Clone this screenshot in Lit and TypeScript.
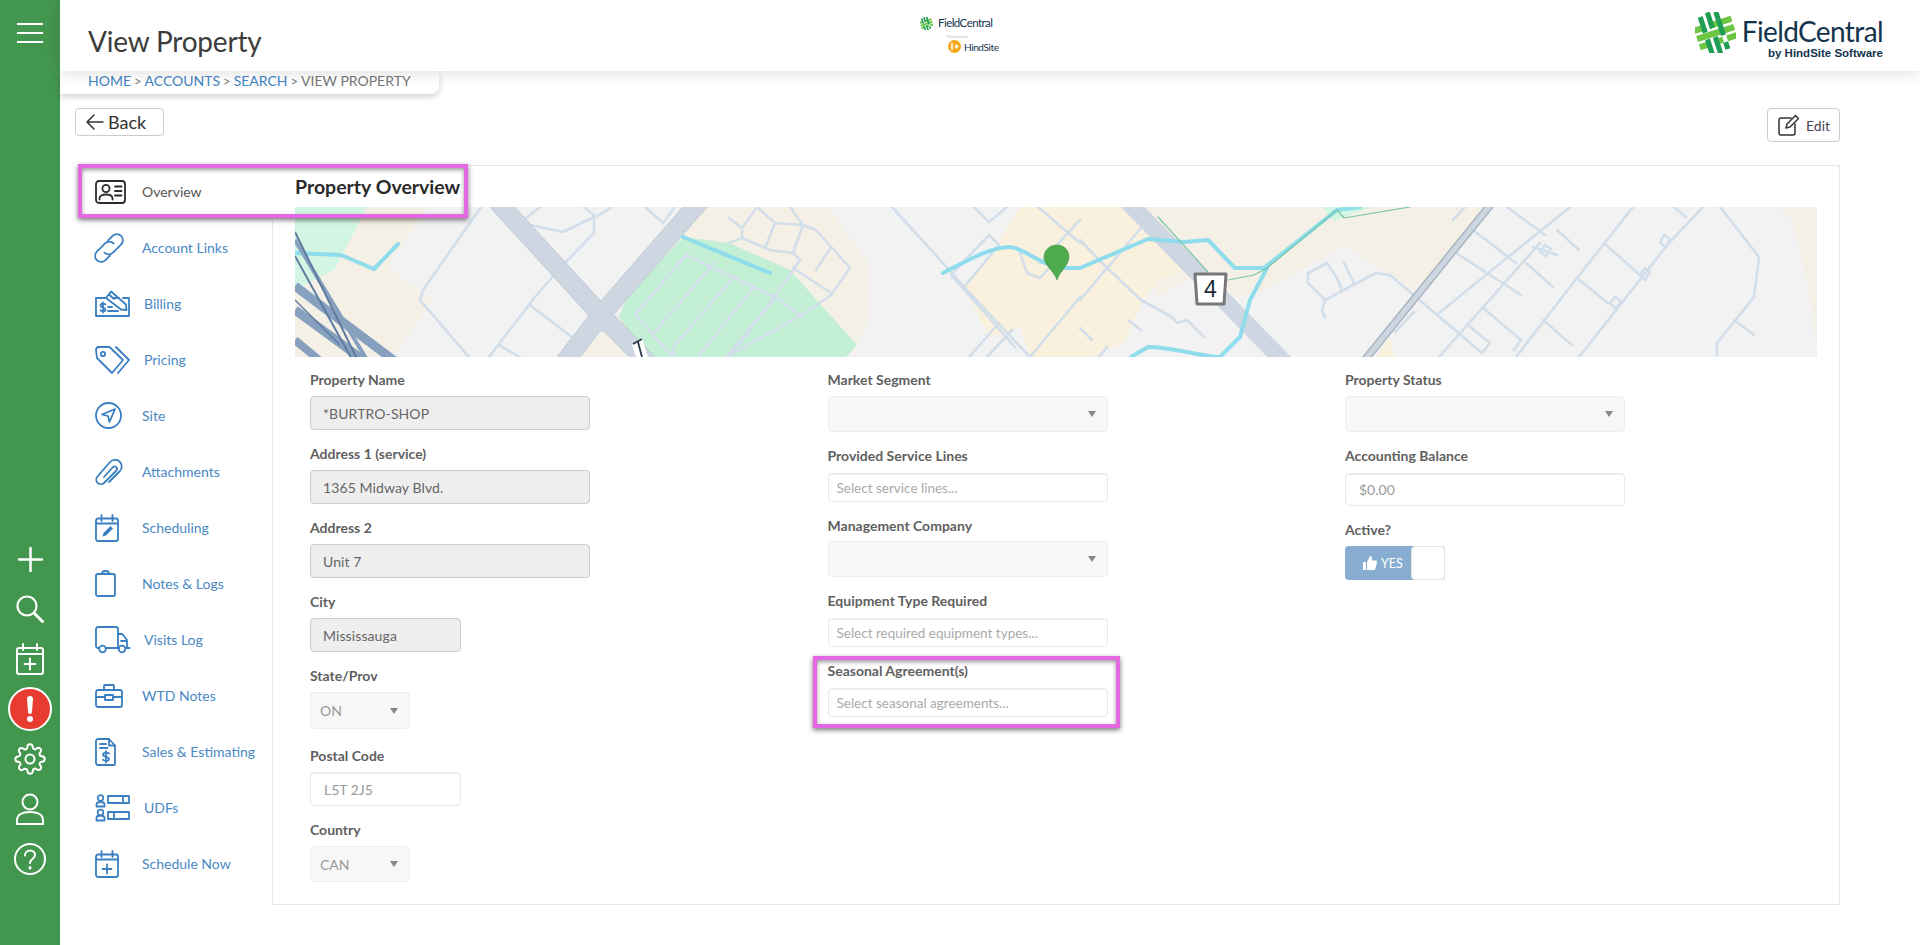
import { LitElement, html, css, svg } from "lit";
import { customElement } from "lit/decorators.js";

const calBase = svg`<rect x="1" y="4.5" width="22" height="22.5" rx="2"/><path d="M1 9.5h22M6.5 1v6M17.5 1v6"/>`;

const navIcons: Record<string, { w: number; h: number; body: unknown }> = {
  overview: { w: 31, h: 24, body: svg`<rect x="1" y="1" width="29" height="22" rx="3"/><circle cx="11" cy="8.5" r="3.6"/><path d="M4.5 19.5v-1.2c0-2.6 2.6-3.8 6.5-3.8s6.5 1.2 6.5 3.8v1.2M20 6.5h6.5M20 11h6.5M20 15.5h6.5"/>` },
  links: { w: 28, h: 28, body: svg`<g transform="rotate(-45 14 14) translate(.98 .98) scale(.93)" style="stroke-width:1.9"><path d="M21 14a6.5 6.5 0 0 0-6.500-6.500H2a6.500 6.500 0 0 0 0 13H9"/><path d="M7 14a6.500 6.500 0 0 0 6.500 6.500H26a6.500 6.500 0 0 0 0-13H19"/></g>` },
  billing: { w: 35, h: 27, body: svg`<path d="M10 8H1v18h33V8h-6M18 8h6"/><path d="M11 8l5-6.500 15 13 .5 5.500-5.500-.5z"/><path d="M14 4.500l5 4.500"/><path d="M10.500 14.500c-1-1.300-5-1.400-5 1s5 1.700 5 4-4 2.200-5 .8M8 12.500v10M13 17h4M13 21h10"/>` },
  pricing: { w: 35, h: 28, body: svg`<path d="M1 4a3 3 0 0 1 3-3h10.500L28 14 17 27 2 12z"/><circle cx="8" cy="8" r="2.200"/><path d="M21 1l13 13-11 13"/>` },
  site: { w: 27, h: 27, body: svg`<circle cx="13.500" cy="13.500" r="12.500"/><path d="M20 7L7 12.500l6 1.500 1.500 6z"/>` },
  attach: { w: 27, h: 28, body: svg`<path d="M9 19L18 9a2.500 2.500 0 0 1 3.500 3.500L9 25a4.600 4.600 0 0 1-6.500-6.500L15 4a6.700 6.700 0 0 1 10 9L14 24"/>` },
  scheduling: { w: 24, h: 28, body: svg`${calBase}<path class="fill" d="M7.500 22.500l1-3.500 7-7 2.500 2.500-7 7z"/>` },
  notes: { w: 21, h: 27, body: svg`<rect x="1" y="4" width="19" height="22" rx="1.800"/><path d="M7 4V3.500a3.500 2.500 0 0 1 7 0V4"/>` },
  visits: { w: 35, h: 27, body: svg`<path d="M4 22H3a2 2 0 0 1-2-2V3a2 2 0 0 1 2-2h18a2 2 0 0 1 2 2v19H11"/><path d="M23 8h3.500a2 2 0 0 1 1.500.8l4 5.200v8h-1M23 22h1M26 15h6"/><circle cx="7.500" cy="23" r="3.300"/><circle cx="27" cy="23" r="3.300"/><path d="M32 22h2.500"/>` },
  wtd: { w: 28, h: 24, body: svg`<rect x="1" y="6" width="26" height="17" rx="2"/><path d="M9 6V2a1 1 0 0 1 1-1h8a1 1 0 0 1 1 1v4M1 13h9M18 13h9"/><rect x="10" y="11" width="8" height="5"/>` },
  sales: { w: 21, h: 28, body: svg`<path d="M3 1h11l6 6.500V26a1 1 0 0 1-1 1H3a2 2 0 0 1-2-2V3a2 2 0 0 1 2-2z"/><path d="M14 1v6.500h6M5 6h6M5 10h7.500"/><path d="M14 15.500c-1-1.200-6-1.300-6 1.200s6 1.800 6 4.200-5 2.300-6 .9M11 13v11.500"/>` },
  udf: { w: 35, h: 27, body: svg`<circle cx="5.500" cy="4" r="2.800"/><path d="M1.500 12.500v-2c0-1.500 1.500-2.500 4-2.500s4 1 4 2.500v2z"/><circle cx="5.500" cy="18.500" r="2.800"/><path d="M1.500 26.500v-2.500c0-1.500 1.500-2.500 4-2.500s4 1 4 2.500v2.500z"/><rect x="13" y="2" width="21" height="7"/><path d="M28 2v7"/><rect x="13" y="18" width="21" height="7"/><path d="M19 18v7"/>` },
  schedule: { w: 24, h: 28, body: svg`${calBase}<path d="M12 14.500v9M7.500 19h9"/>` },
};

const navItems = [
  { label: "Overview", icon: "overview", active: true },
  { label: "Account Links", icon: "links" },
  { label: "Billing", icon: "billing", wide: true },
  { label: "Pricing", icon: "pricing", wide: true },
  { label: "Site", icon: "site" },
  { label: "Attachments", icon: "attach" },
  { label: "Scheduling", icon: "scheduling" },
  { label: "Notes & Logs", icon: "notes" },
  { label: "Visits Log", icon: "visits", wide: true },
  { label: "WTD Notes", icon: "wtd" },
  { label: "Sales & Estimating", icon: "sales" },
  { label: "UDFs", icon: "udf", wide: true },
  { label: "Schedule Now", icon: "schedule" },
];

type Field = { label: string; kind: string; value?: string; cls?: string };
const col1: Field[] = [
  { label: "Property Name", kind: "ro", value: "*BURTRO-SHOP" },
  { label: "Address 1 (service)", kind: "ro", value: "1365 Midway Blvd." },
  { label: "Address 2", kind: "ro", value: "Unit 7" },
  { label: "City", kind: "ro", value: "Mississauga", cls: "w150" },
  { label: "State/Prov", kind: "sel", value: "ON", cls: "w100 tall gap17" },
  { label: "Postal Code", kind: "txt", value: "L5T 2J5", cls: "w150" },
  { label: "Country", kind: "sel", value: "CAN", cls: "w100" },
];
const col2: Field[] = [
  { label: "Market Segment", kind: "sel" },
  { label: "Provided Service Lines", kind: "multi", value: "Select service lines..." },
  { label: "Management Company", kind: "sel", cls: "sel-gap" },
  { label: "Equipment Type Required", kind: "multi", value: "Select required equipment types..." },
  { label: "Seasonal Agreement(s)", kind: "multi", value: "Select seasonal agreements..." },
];
const col3: Field[] = [
  { label: "Property Status", kind: "sel" },
  { label: "Accounting Balance", kind: "txt", value: "$0.00", cls: "mt7 h33" },
];

const thinRoads = [
  "M481 207L423 290l-3 10 49 57",
  "M540 207l-20 16 43 9 31-15v16l-31 32-28 32-46 60",
  "M584 207l12 10 16-10",
  "M530 305l43 33M499 345l21 12",
  "M645 207l18 16 12-16",
  "M729 218l13 10v10M757 207l-15 21M757 207l18 16-10 25M790 207l13 18-10 28M775 223l28 2 13 5 34 38-19 27-26 18-79 44",
  "M729 243l13-5 28 12 23 3 7 7-30 43-30 40-12 14",
  "M816 270l15-23M793 268l38 25",
  "M686 255l-51 60 38 42M686 255l89 42 28 20",
  "M714 263l-62 72M734 277l-61 70v10M754 287l-56 70M775 298l-49 59",
  "M892 207l51 56 21 24 66 70M974 207l15 15 18-15",
  "M989 235l10 10M989 235l-38 40 64 72M999 245l-35 42",
  "M1030 357l50-60M969 357l30-34M987 357l25-27",
  "M1038 207l42 36M1080 220l-40 43M1020 253l7 20 13 5 10-11",
  "M1080 240l22 23 39 37 31 17 5 6 10-3 17 17",
  "M1141 228l-61 72M1128 320l13 10M1080 328l12 12M1107 347l-8 10",
  "M1308 273l19-10 10 15 5 12M1308 273v10l17 17-3 10 3 8M1325 300l51-27 14 2 92 78 8-10-22-18M1344 263l10 20",
  "M1453 220l12-13M1473 230l43 33M1456 253l65 42M1570 207l-131 106M1633 207l-56 71-61 79M1703 207l-34 36-90 114",
  "M1557 230l22 20M1533 247l24 8M1526 263l27 24M1606 245l34 30M1577 278l31 25M1482 307l39 33-7 10M1543 320l29 25",
  "M1720 207l39 50-5 40-37 46v14M1734 320l20 15",
  "M1507 207l38 28M1686 217l-12-10M1439 357l101-114M1395 332l19-20",
  "M1660 243l4-8 6 4-4 8zM1540 252l5-7 6 4-5 7zM1610 303l5-6 6 4-5 8zM1640 275l5-7 5 4-5 8z",
];

const rivers = [
  "M295 253L341 255 374 269 398 244",
  "M683 237L770 273",
  "M943 273C965 262 990 247 1010 247c8 0 22 10 35 16s24 5 35 5",
  "M1080 268l68-29 36 3 24-2 27 28 29 0 73-58 23-3",
  "M1131 357l17-10c25 0 55 10 72 10l20-20 10-37 17-32",
];

@customElement("app-root")
export class AppRoot extends LitElement {
  static styles = css`
    :host { display: block; width: 1920px; min-height: 945px; font-family: Lato, "Open Sans", sans-serif; background: #fff; color: #555; }
    .page { display: flex; height: 945px; overflow: hidden; }
    .rail { width: 60px; flex: none; background: #43964d; display: flex; flex-direction: column; align-items: center; padding-bottom: 61px; box-sizing: border-box; }
    .burger { margin-top: 23px; width: 26px; height: 20px; display: flex; flex-direction: column; justify-content: space-between; }
    .burger i { display: block; height: 2px; background: #fff; }
    .rail-group { margin-top: auto; display: flex; flex-direction: column; align-items: center; }
    .rail-item { height: 50px; display: flex; align-items: center; justify-content: center; }
    .rail svg { fill: none; stroke: #fff; stroke-width: 2; stroke-linecap: round; stroke-linejoin: round; display: block; overflow: visible; }
    .alert { width: 40px; height: 40px; border-radius: 50%; border: 2px solid #fff; background: #e73c2f; display: flex; align-items: center; justify-content: center; }

    .main { flex: 1; min-width: 0; display: flex; flex-direction: column; }
    .top { position: relative; z-index: 3; height: 71px; flex: none; background: #fff; box-shadow: 0 2px 14px rgba(0,0,0,.13); display: flex; align-items: flex-start; }
    .title { width: 860px; box-sizing: border-box; padding: 22px 0 0 28px; font-size: 28px; line-height: 38px; color: #3c3c3c; letter-spacing: -.2px; }
    .mini { padding-top: 15px; width: 82px; }
    .mini-top { display: flex; align-items: center; gap: 5px; }
    .mini-name { font-size: 11.5px; line-height: 16px; color: #13344d; letter-spacing: -.55px; }
    .mini-pow { font-size: 4px; line-height: 5px; color: #bbb; margin: 3px 0 1px 27px; }
    .mini-hs { display: flex; align-items: center; gap: 3px; margin-left: 28px; }
    .mini-dot { width: 13px; height: 13px; border-radius: 50%; background: #f6a81c; display: flex; align-items: center; justify-content: center; }
    .mini-hs span { font-size: 10px; color: #13344d; letter-spacing: -.4px; }
    .brand { margin-left: auto; padding: 12px 37px 0 0; display: flex; gap: 6px; }
    .brand-text { display: flex; flex-direction: column; align-items: flex-end; padding-top: 4px; }
    .brand-name { font-size: 28px; line-height: 30px; color: #13344d; letter-spacing: -.6px; }
    .brand-sub { font: 700 11.5px/12px "Liberation Sans", sans-serif; color: #13344d; margin-top: 1px; }
    .crumb-tab { position: relative; z-index: 2; width: 379px; height: 23px; box-sizing: border-box; flex: none; background: #fff; border-bottom-right-radius: 8px; box-shadow: 0 3px 6px rgba(0,0,0,.18); padding-left: 28px; font-size: 14px; line-height: 20px; color: #777; white-space: nowrap; }
    .crumb-tab a { color: #3f84c4; }
    .crumb-tab b { font-weight: 400; font-size: 13px; margin: 0 3px; }

    .tools { display: flex; justify-content: space-between; align-items: flex-start; padding: 14px 80px 0 15px; height: 71px; box-sizing: border-box; flex: none; }
    .btn { display: flex; align-items: center; box-sizing: border-box; background: #fff; border: 1px solid #ccc; border-radius: 4px; }
    .back { width: 89px; height: 28px; padding-left: 10px; gap: 4px; font-size: 18px; color: #333; }
    .edit { width: 73px; height: 34px; padding-left: 10px; gap: 6px; font-size: 14px; color: #445; }
    .btn svg { fill: none; stroke: #333; stroke-width: 1.5; stroke-linecap: round; stroke-linejoin: round; display: block; }

    .body { position: relative; display: flex; flex: 1; padding-left: 15px; padding-right: 80px; min-height: 0; align-items: flex-start; }
    .nav { width: 198px; flex: none; margin-right: -1px; position: relative; z-index: 1; }
    .nav-item { height: 56px; display: flex; align-items: center; padding: 0 0 3px 20px; box-sizing: border-box; font-size: 14px; color: #4a88c4; }
    .nav-item.active { background: #fff; color: #555; }
    .nav-icon { width: 47px; flex: none; display: flex; }
    .nav-item.wide .nav-icon { width: 49px; }
    .nav-icon svg { fill: none; stroke: #3a7fc1; stroke-width: 1.8; stroke-linecap: round; stroke-linejoin: round; display: block; overflow: visible; }
    .nav-icon svg .fill { fill: #3a7fc1; stroke: none; }
    .active .nav-icon svg { stroke: #2b2b2b; }

    .panel { flex: 1; min-width: 0; height: 740px; box-sizing: border-box; border: 1px solid #e6e6e6; padding: 0 22px; }
    .panel h2 { margin: 0; font-size: 19.5px; font-weight: 700; line-height: 41px; color: #2a2a2a; height: 41px; }
    .map { display: block; width: 1522px; height: 150px; }
    .form { display: grid; grid-template-columns: repeat(3, 517.5px); margin-top: 13px; }
    .col { padding-left: 15px; }
    .field { margin-bottom: 14px; }
    .field > label { display: block; height: 20px; line-height: 20px; font-size: 14px; font-weight: 700; color: #5f5f5f; }
    .ctl { box-sizing: border-box; width: 280px; margin-top: 6px; border-radius: 4px; font-size: 14px; display: flex; align-items: center; position: relative; }
    .ctl.ro { height: 34px; background: #eee; border: 1px solid #ccc; padding-left: 12px; color: #666; letter-spacing: .1px; }
    .ctl.txt { height: 34px; background: #fff; border: 1px solid #e8e8e8; box-shadow: inset 0 1px 1px rgba(0,0,0,.08); padding-left: 13px; color: #999; }
    .ctl.sel { height: 36px; background: #f7f7f7; border: 1px solid #eee; padding-left: 9px; color: #999; }
    .ctl.multi { height: 29px; margin-top: 7px; background: #fff; border: 1px solid #e8e8e8; box-shadow: inset 0 1px 1px rgba(0,0,0,.06); padding-left: 8px; color: #aaa; font-size: 13.5px; }
    .ctl.sel::after { content: ""; position: absolute; right: 11px; top: 50%; margin-top: -3px; border: 4px solid transparent; border-top: 6px solid #888; border-bottom: 0; }
    .w150 .ctl { width: 151px; }
    .w100 .ctl { width: 100px; }
    .tall .ctl { height: 37px; }
    .gap17 { margin-bottom: 17px; }
    .mt7 .ctl { margin-top: 7px; }
    .h33 .ctl { height: 33px; }
    .sel-gap .ctl { margin-top: 5px; }
    .toggle { box-sizing: border-box; width: 100px; height: 34px; margin-top: 6px; border-radius: 4px; background: #87aed0; display: flex; align-items: center; color: #fff; font-size: 12.5px; position: relative; padding-left: 18px; gap: 4px; }
    .toggle svg { fill: #fff; display: block; }
    .knob { position: absolute; right: 0; top: 0; bottom: 0; width: 34px; box-sizing: border-box; background: #fff; border: 1px solid #e6e6e6; border-radius: 4px; }

    .mark { position: absolute; z-index: 4; box-sizing: border-box; border: 4px solid #e667e2; box-shadow: 0 2px 5px rgba(0,0,0,.55), inset 0 2px 4px rgba(0,0,0,.4); pointer-events: none; }
    .mark-a { left: 18px; top: -1px; width: 390px; height: 54px; }
    .mark-b { left: 753px; top: 491px; width: 307px; height: 72px; }
    .logo { display: block; flex: none; }
  `;

  private navIcon(name: string) {
    const i = navIcons[name];
    return html`<svg width=${i.w} height=${i.h} viewBox="0 0 ${i.w} ${i.h}">${i.body}</svg>`;
  }

  private field(f: Field) {
    return html`<div class="field ${f.cls ?? ""}">
      <label>${f.label}</label>
      <div class="ctl ${f.kind}">${f.value ?? ""}</div>
    </div>`;
  }

  private logoMark(size: number) {
    return html`<svg class="logo" width=${size} height=${size} viewBox="0 0 40 40">
      <g transform="rotate(-18 20 20)">
        <path fill="#6cc644" d="M1 9h11v6H1zM16 9h23v6H16zM1 17.500h38v6H1zM1 26h11v6H1zM16 26h9v6h-9zM29 26h10v6H29z"/>
        <path fill="#1f9d55" d="M8 1h5v16H8zM16 -1h5v16h-5zM24 1h5v24h-5zM8 24h5v16H8zM16 24h5v17h-5zM24 32h5v7h-5z"/>
      </g>
    </svg>`;
  }

  private map() {
    return html`<svg class="map" viewBox="295 207 1522 150" preserveAspectRatio="none">
      <rect x="295" y="207" width="1522" height="150" fill="#f2f2f2"/>
      ${svg`
      <path fill="#f5f0e5" d="M365 207h63l-41 60 46 33-31 43-7 14H295v-67z"/>
      <path fill="#d2f6e3" d="M295 207h72l-32 62-40 21z"/>
      <path fill="#f5f0e5" d="M703 207h125l41 56v54l-12 28-11 12H627l-8-40 8-20z"/>
      <path fill="#f5f0e5" d="M555 357l31-20 20-4 21 24z"/>
      <path fill="#f5f0e5" d="M1124 207h366l-37 50-39 33-70-45-85 48-24 4-31-27-45 27-35-60z"/>
      <path fill="#f9f0dd" d="M964 287l30-37 26-43h104l58 63-24 10-15 20-19 43-34 14h-60l-10-30-31 10z"/>
      <path fill="#c3f0d5" d="M683 237l46 6 61 27 67 75-11 12H647l-28-40 8-20z"/>
      <path fill="#d2f6e3" d="M1322 207h50l-28 10-10 4z"/>
      <path fill="#f5f0e5" d="M1778 207h39v150l-5-50-8-40-11-45z"/>
      <path fill="#f9f0dd" d="M1376 357l14-20 5 20z"/>
      `}
      <g fill="none" stroke-linecap="round" stroke-linejoin="round">
        <g stroke="#d2deea" stroke-width="2.600">${thinRoads.map((d) => svg`<path d=${d}/>`)}</g>
        <g stroke-linecap="butt">
          <path d="M496 200L601 315 650 365" stroke="#b9c4cf" stroke-width="19"/>
          <path d="M701 200L601 315 560 368" stroke="#b9c4cf" stroke-width="19"/>
          <path d="M496 200L601 315 650 365" stroke="#cdd6e1" stroke-width="18"/>
          <path d="M701 200L601 315 560 368" stroke="#cdd6e1" stroke-width="18"/>
          <circle cx="601" cy="318" r="14" fill="#cdd6e1"/>
          <path d="M1125 199L1287 365" stroke="#cdd6e1" stroke-width="17"/>
          <path d="M1492 203L1364 361" stroke="#a9b5c1" stroke-width="8"/>
          <path d="M1492 203L1364 361" stroke="#cdd6e1" stroke-width="5"/>
        </g>
        <g stroke="#8edcec">
          ${rivers.map((d) => svg`<path d=${d} stroke-width="4"/>`)}
        </g>
        <path d="M1158 217l50 55M1228 280l26-5 13-7 70-58 7 8 66-11" stroke="#76c6a6" stroke-width="1.200"/>
        <g stroke="#87a0bf" stroke-linecap="butt">
          <path d="M295 286L400 365" stroke-width="9"/>
          <path d="M295 310L370 365" stroke-width="9"/>
          <path d="M295 340L325 365" stroke-width="8"/>
          <path d="M295 240L370 365" stroke-width="4"/>
          <path d="M295 232L360 365" stroke="#5e7ba0" stroke-width="2"/>
          <path d="M295 256L355 365" stroke="#5e7ba0" stroke-width="2"/>
          <path d="M295 300L340 345" stroke="#5e7ba0" stroke-width="1.500"/>
        </g>
      </g>
      <path d="M632 345l10-7 6 19h-12z" fill="#fff"/>
      <path d="M633 344l9-5M638 342l4 15" fill="none" stroke="#2a3a4d" stroke-width="1.800"/>
      <path d="M1057 245c7 0 12 5 12 12 0 8-9 14-12 23-3-9-13-15-13-23 0-7 6-12 13-12z" fill="#4dab4d" stroke="#3f8f42" stroke-width=".5"/>
      <path d="M1195 274h31l-2 30h-27z" fill="#fff" stroke="#777" stroke-width="3" stroke-linejoin="round"/>
      <text x="1210.500" y="297" font-size="23" text-anchor="middle" fill="#1c2b3a" font-family="Liberation Sans, sans-serif">4</text>
    </svg>`;
  }

  render() {
    return html`<div class="page">
      <aside class="rail">
        <div class="burger"><i></i><i></i><i></i></div>
        <div class="rail-group">
          <div class="rail-item"><svg width="25" height="25" viewBox="0 0 25 25" style="stroke-width:2.5"><path d="M12.500 1v23M1 12.500h23"/></svg></div>
          <div class="rail-item"><svg width="28" height="28" viewBox="0 0 28 28" style="stroke-width:2.2"><circle cx="11" cy="11" r="9.500"/><path d="M18 18l8.500 8.500" style="stroke-width:3"/></svg></div>
          <div class="rail-item"><svg width="28" height="32" viewBox="0 0 28 32"><rect x="1" y="5" width="26" height="26" rx="2"/><path d="M1 11h26M7 1v6M21 1v6M14 15.500v11M8.500 21h11"/></svg></div>
          <div class="rail-item"><div class="alert"><svg width="8" height="26" viewBox="0 0 8 26" style="stroke:none;fill:#fff"><path d="M1 3a3 3 0 0 1 6 0l-1 13a2 2 0 0 1-4 0z"/><circle cx="4" cy="23" r="3"/></svg></div></div>
          <div class="rail-item"><svg width="32" height="32" viewBox="0 0 24 24" style="stroke-width:1.5"><circle cx="12" cy="12" r="3.400"/><path d="M19.400 15a1.650 1.650 0 0 0 .33 1.820l.06.06a2 2 0 0 1 0 2.830 2 2 0 0 1-2.830 0l-.06-.06a1.650 1.650 0 0 0-1.820-.33 1.650 1.650 0 0 0-1 1.510V21a2 2 0 0 1-2 2 2 2 0 0 1-2-2v-.09A1.650 1.650 0 0 0 9 19.400a1.650 1.650 0 0 0-1.820.33l-.06.06a2 2 0 0 1-2.830 0 2 2 0 0 1 0-2.830l.06-.06a1.650 1.650 0 0 0 .33-1.820 1.650 1.650 0 0 0-1.510-1H3a2 2 0 0 1-2-2 2 2 0 0 1 2-2h.09A1.650 1.650 0 0 0 4.600 9a1.650 1.650 0 0 0-.33-1.820l-.06-.06a2 2 0 0 1 0-2.830 2 2 0 0 1 2.830 0l.06.06a1.650 1.650 0 0 0 1.820.33H9a1.650 1.650 0 0 0 1-1.510V3a2 2 0 0 1 2-2 2 2 0 0 1 2 2v.09a1.650 1.650 0 0 0 1 1.510 1.650 1.650 0 0 0 1.820-.33l.06-.06a2 2 0 0 1 2.830 0 2 2 0 0 1 0 2.830l-.06.06a1.650 1.650 0 0 0-.33 1.820V9a1.650 1.650 0 0 0 1.510 1H21a2 2 0 0 1 2 2 2 2 0 0 1-2 2h-.09a1.650 1.650 0 0 0-1.510 1z"/></svg></div>
          <div class="rail-item"><svg width="28" height="32" viewBox="0 0 28 32"><circle cx="14" cy="9" r="7.500"/><path d="M1 31v-4c0-5 5-8 13-8s13 3 13 8v4z"/></svg></div>
          <div class="rail-item"><svg width="32" height="32" viewBox="0 0 32 32"><circle cx="16" cy="16" r="15"/><path d="M11 12.500c0-3 2.200-5 5-5s5 2 5 4.500c0 4-5 4-5 8"/><path d="M16 24.500v.5" style="stroke-width:3"/></svg></div>
        </div>
      </aside>
      <div class="main">
        <header class="top">
          <div class="title">View Property</div>
          <div class="mini">
            <div class="mini-top">${this.logoMark(13)}<span class="mini-name">FieldCentral</span></div>
            <div class="mini-pow">Powered by</div>
            <div class="mini-hs"><div class="mini-dot"><svg width="9" height="9" viewBox="0 0 9 9" fill="none" stroke="#fff" stroke-width="1.500"><path d="M2 1v7M4.500 4.500h4M6.500 2.500v4"/></svg></div><span>HindSite</span></div>
          </div>
          <div class="brand">
            ${this.logoMark(41)}
            <div class="brand-text">
              <div class="brand-name">FieldCentral</div>
              <div class="brand-sub">by HindSite Software</div>
            </div>
          </div>
        </header>
        <div class="crumb-tab"><a>HOME</a><b>&gt;</b><a>ACCOUNTS</a><b>&gt;</b><a>SEARCH</a><b>&gt;</b>VIEW PROPERTY</div>
        <div class="tools">
          <div class="btn back"><svg width="18" height="16" viewBox="0 0 18 16"><path d="M8 1L1 8l7 7M1 8h16"/></svg>Back</div>
          <div class="btn edit"><svg width="22" height="22" viewBox="0 0 22 22"><path d="M13 4H3a2 2 0 0 0-2 2v13a2 2 0 0 0 2 2h12a2 2 0 0 0 2-2V10"/><path d="M8 14l1-4 8.500-8.500 3 3L12 13z"/></svg>Edit</div>
        </div>
        <div class="body">
          <nav class="nav">
            ${navItems.map(
              (n) => html`<div class="nav-item ${n.active ? "active" : ""} ${n.wide ? "wide" : ""}">
                <span class="nav-icon">${this.navIcon(n.icon)}</span><span>${n.label}</span>
              </div>`
            )}
          </nav>
          <section class="panel">
            <h2>Property Overview</h2>
            ${this.map()}
            <div class="form">
              <div class="col">${col1.map((f) => this.field(f))}</div>
              <div class="col">${col2.map((f) => this.field(f))}</div>
              <div class="col">
                ${col3.map((f) => this.field(f))}
                <div class="field">
                  <label>Active?</label>
                  <div class="toggle">
                    <svg width="14" height="14" viewBox="0 0 14 14"><path d="M0 6h3v8H0zM4 6l3-6c1.500 0 2 1 2 2v2.500h4c1 0 1.200 1 1 1.500l-1.500 6.500c-.2.700-.7 1.500-1.500 1.500H4z"/></svg>
                    YES
                    <div class="knob"></div>
                  </div>
                </div>
              </div>
            </div>
          </section>
          <div class="mark mark-a"></div>
          <div class="mark mark-b"></div>
        </div>
      </div>
    </div>`;
  }
}
